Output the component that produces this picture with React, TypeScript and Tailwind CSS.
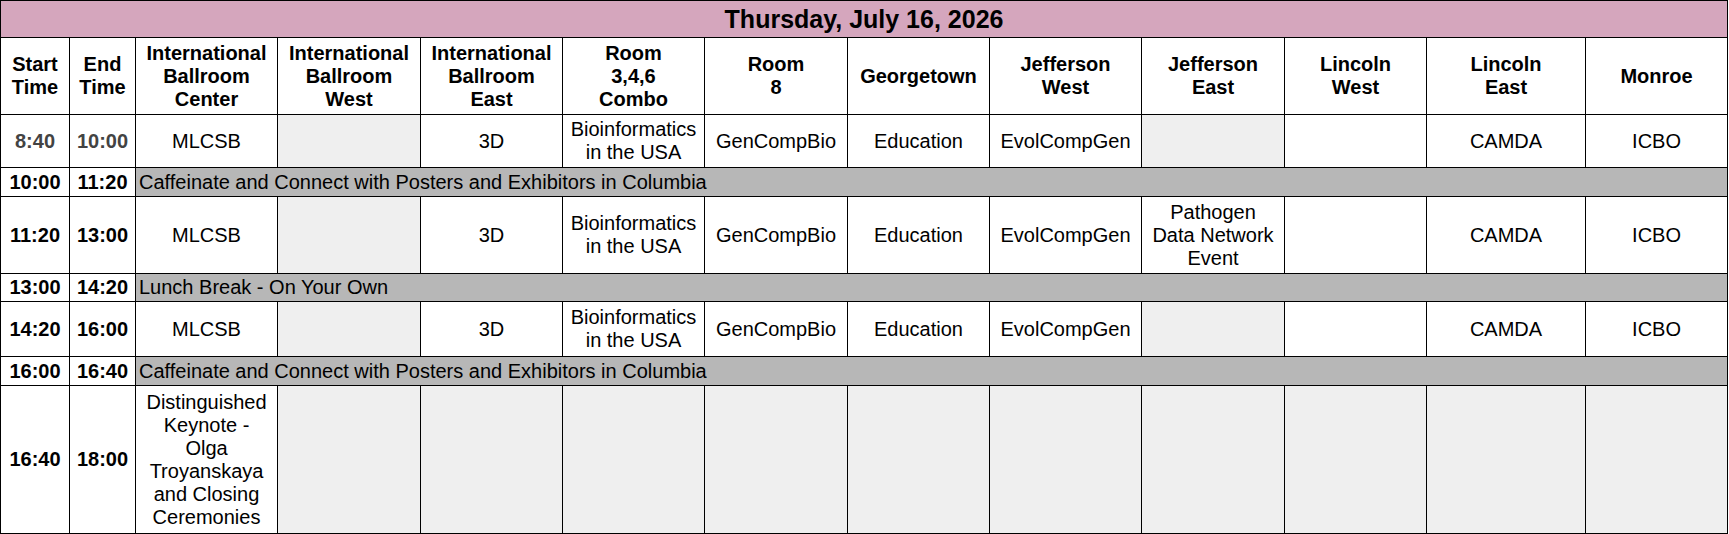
const COLS = [69, 66, 142, 143, 142, 142, 143, 142, 152, 143, 142, 159, 142];

const ROOMS: string[][] = [
  ['International', 'Ballroom', 'Center'],
  ['International', 'Ballroom', 'West'],
  ['International', 'Ballroom', 'East'],
  ['Room', '3,4,6', 'Combo'],
  ['Room', '8'],
  ['Georgetown'],
  ['Jefferson', 'West'],
  ['Jefferson', 'East'],
  ['Lincoln', 'West'],
  ['Lincoln', 'East'],
  ['Monroe'],
];

/** null = unused room (grey), [] = open room (white), otherwise text lines */
type Slot = string[] | null;

type Row =
  | { kind: 'session'; start: string; end: string; height: string; muted?: boolean; slots: Slot[] }
  | { kind: 'break'; start: string; end: string; height: string; label: string };

const BIO = ['Bioinformatics', 'in the USA'];

const ROWS: Row[] = [
  {
    kind: 'session',
    start: '8:40',
    end: '10:00',
    height: 'h-[53px]',
    muted: true,
    slots: [['MLCSB'], null, ['3D'], BIO, ['GenCompBio'], ['Education'], ['EvolCompGen'], null, [], ['CAMDA'], ['ICBO']],
  },
  {
    kind: 'break',
    start: '10:00',
    end: '11:20',
    height: 'h-[29px]',
    label: 'Caffeinate and Connect with Posters and Exhibitors in Columbia',
  },
  {
    kind: 'session',
    start: '11:20',
    end: '13:00',
    height: 'h-[77px]',
    slots: [
      ['MLCSB'],
      null,
      ['3D'],
      BIO,
      ['GenCompBio'],
      ['Education'],
      ['EvolCompGen'],
      ['Pathogen', 'Data Network', 'Event'],
      [],
      ['CAMDA'],
      ['ICBO'],
    ],
  },
  { kind: 'break', start: '13:00', end: '14:20', height: 'h-[28px]', label: 'Lunch Break - On Your Own' },
  {
    kind: 'session',
    start: '14:20',
    end: '16:00',
    height: 'h-[55px]',
    slots: [['MLCSB'], null, ['3D'], BIO, ['GenCompBio'], ['Education'], ['EvolCompGen'], null, [], ['CAMDA'], ['ICBO']],
  },
  {
    kind: 'break',
    start: '16:00',
    end: '16:40',
    height: 'h-[29px]',
    label: 'Caffeinate and Connect with Posters and Exhibitors in Columbia',
  },
  {
    kind: 'session',
    start: '16:40',
    end: '18:00',
    height: 'h-[148px]',
    slots: [
      ['Distinguished', 'Keynote -', 'Olga', 'Troyanskaya', 'and Closing', 'Ceremonies'],
      null,
      null,
      null,
      null,
      null,
      null,
      null,
      null,
      null,
      null,
    ],
  },
];

function Lines({ lines }: { lines: string[] }) {
  return (
    <>
      {lines.map((l, i) => (
        <span key={i} className="block">
          {l}
        </span>
      ))}
    </>
  );
}

const cell = 'border border-black px-[3px] py-0 align-middle';

export default function App() {
  return (
    <div className="bg-white">
      <table className="w-[1728px] table-fixed border-collapse font-['Liberation_Sans',Arial,sans-serif] text-[20px] leading-[23px] text-black">
        <colgroup>
          {COLS.map((w, i) => (
            <col key={i} style={{ width: w }} />
          ))}
        </colgroup>
        <thead>
          <tr className="h-[37px]">
            <th colSpan={13} className={`${cell} bg-[#d5a6bd] text-center text-[25px] font-bold`}>
              Thursday, July 16, 2026
            </th>
          </tr>
          <tr className="h-[77px]">
            <th className={`${cell} text-center font-bold`}>
              <Lines lines={['Start', 'Time']} />
            </th>
            <th className={`${cell} text-center font-bold`}>
              <Lines lines={['End', 'Time']} />
            </th>
            {ROOMS.map((r, i) => (
              <th key={i} className={`${cell} text-center font-bold`}>
                <Lines lines={r} />
              </th>
            ))}
          </tr>
        </thead>
        <tbody>
          {ROWS.map((row, ri) => (
            <tr key={ri} className={row.height}>
              <td className={`${cell} text-center font-bold ${row.kind === 'session' && row.muted ? 'text-[#434343]' : ''}`}>
                {row.start}
              </td>
              <td className={`${cell} text-center font-bold ${row.kind === 'session' && row.muted ? 'text-[#434343]' : ''}`}>
                {row.end}
              </td>
              {row.kind === 'break' ? (
                <td colSpan={11} className={`${cell} bg-[#b7b7b7] text-left`}>
                  {row.label}
                </td>
              ) : (
                row.slots.map((s, i) =>
                  s === null ? (
                    <td key={i} className={`${cell} bg-[#efefef]`} />
                  ) : (
                    <td key={i} className={`${cell} bg-white text-center`}>
                      <Lines lines={s} />
                    </td>
                  ),
                )
              )}
            </tr>
          ))}
        </tbody>
      </table>
    </div>
  );
}
